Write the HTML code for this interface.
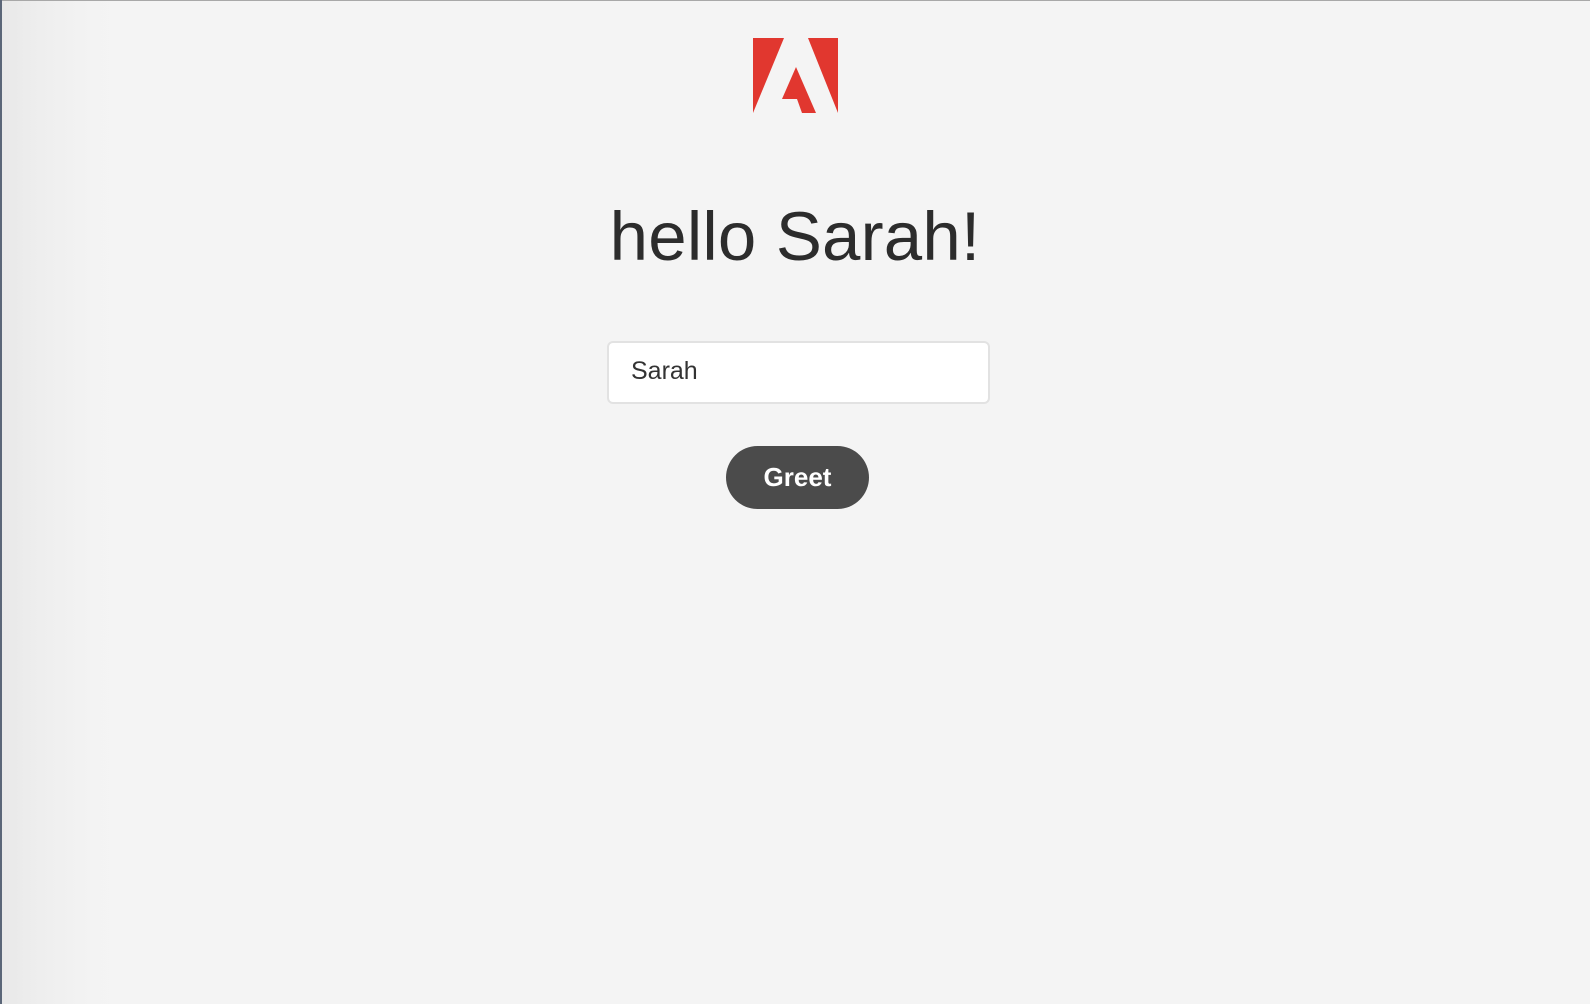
<!DOCTYPE html>
<html><head><meta charset="utf-8"><style>
html,body{margin:0;padding:0;width:1590px;height:1004px;overflow:hidden;background:#f4f4f4;}
.bg{position:absolute;left:0;top:0;width:1590px;height:1004px;background:linear-gradient(to right,#e8e8e8 0px,#eeeeee 40px,#f3f3f3 90px,#f4f4f4 130px);}
.top{position:absolute;left:0;top:0;width:1590px;height:1px;background:#a8a8a8;}
.left{position:absolute;left:0;top:0;width:2px;height:1004px;background:#5b6678;}
h1{position:absolute;left:0;width:1590px;top:197px;margin:0;text-align:center;font:300 69px "Liberation Sans",sans-serif;color:#2c2c2c;letter-spacing:0.2px;}
.inp{position:absolute;left:607px;top:341px;width:379px;height:59px;background:#fff;border:2px solid #e2e2e2;border-radius:6px;}
.inp span{position:absolute;left:22px;top:14px;font:25px "Liberation Sans",sans-serif;color:#333;}
.btn{position:absolute;left:726px;top:446px;width:143px;height:63px;border-radius:32px;background:#4b4b4b;color:#fff;font:bold 26px "Liberation Sans",sans-serif;text-align:center;line-height:63px;}
</style></head><body>
<div class="bg"></div><div class="top"></div><div class="left"></div>
<svg style="position:absolute;left:0;top:0" width="1590" height="1004">
<polygon fill="#e1372f" points="753,38 784,38 753,113"/>
<polygon fill="#e1372f" points="808,38 838,38 838,113"/>
<polygon fill="#e1372f" points="796,67 816,113 802,113 797,99 782,99"/>
</svg>
<h1>hello Sarah!</h1>
<div class="inp"><span>Sarah</span></div>
<div class="btn">Greet</div>
</body></html>
